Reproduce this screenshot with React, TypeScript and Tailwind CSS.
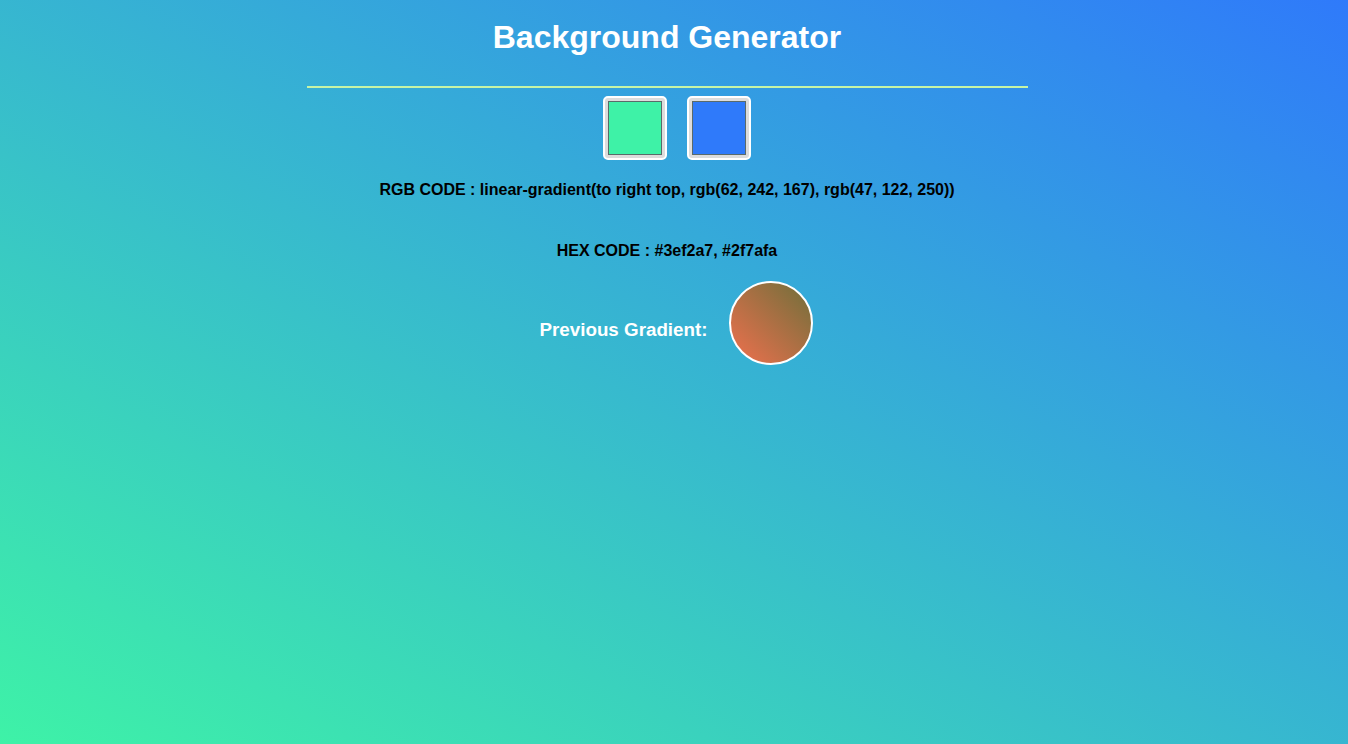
import React from 'react';

const Swatch: React.FC<{ color: string }> = ({ color }) => (
    <div className="w-[64px] h-[64px] rounded-[5px] border-2 border-white bg-[#dcdcdc] p-[3px]">
        <div className="w-full h-full border border-[#5a6a6a]" style={{ backgroundColor: color }} />
    </div>
);

const App: React.FC = () => {
    return (
        <div className="min-h-[744px] w-full bg-[linear-gradient(to_right_top,#3ef2a7,#2f7afa)] font-['Liberation_Sans',Arial,sans-serif]">
            <div className="w-[1334px] text-center">
                <h1 className="pt-[17px] text-[32px] leading-[40px] font-bold text-white">Background Generator</h1>
                <div className="mx-auto mt-[29px] h-[2px] w-[721px] bg-[#c6f4a6]" />
                <div className="mt-[8px] flex justify-center gap-[20px] pl-[20px]">
                    <Swatch color="#3ef2a7" />
                    <Swatch color="#2f7afa" />
                </div>
                <p className="mt-[21px] text-[16px] leading-[18px] font-bold text-black">
                    RGB CODE : linear-gradient(to right top, rgb(62, 242, 167), rgb(47, 122, 250))
                </p>
                <p className="mt-[43px] text-[16px] leading-[18px] font-bold text-black">
                    HEX CODE : #3ef2a7, #2f7afa
                </p>
                <div className="mt-[21px] flex items-center justify-center gap-[21px] pl-[18px]">
                    <span className="mt-[15px] text-[18.8px] font-bold text-white">Previous Gradient:</span>
                    <div className="h-[84px] w-[84px] rounded-full border-2 border-white bg-[linear-gradient(to_right_top,#f0704e,#6e6f3a)]" />
                </div>
            </div>
        </div>
    );
};

export default App;
